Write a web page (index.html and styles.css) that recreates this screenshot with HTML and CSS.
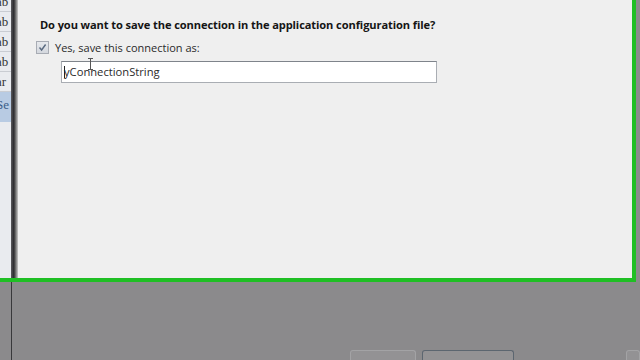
FILE: index.html
```html
<!DOCTYPE html>
<html lang="en">
<head>
  <meta charset="UTF-8" />
  <title>Save Connection String</title>
  <link rel="stylesheet" href="styles.css">
</head>
<body>
  <div class="capture">
    <div class="side-list">
      <div class="side-item">ab</div>
      <div class="side-item">ab</div>
      <div class="side-item">ab</div>
      <div class="side-item">ab</div>
      <div class="side-item">ar</div>
      <div class="side-item selected">Se</div>
    </div>
    <div class="frame-edge"></div>
    <div class="wizard-body">
      <h2 class="question">Do you want to save the connection in the application configuration file?</h2>
      <label class="save-option">
        <span class="check-box">
          <svg width="9" height="9" viewBox="0 0 9 9"><path d="M1.5 4.5 L3.6 7 L7.6 1.5" fill="none" stroke="#5a6a80" stroke-width="1.4"/></svg>
        </span>
        Yes, save this connection as:
      </label>
      <div class="name-field">
        <span class="caret"></span>yConnectionString
        <span class="ibeam"></span>
      </div>
    </div>
  </div>
  <div class="lower">
    <div class="lower-edge"></div>
    <div class="buttons">
      <span class="btn"></span>
      <span class="btn default"></span>
      <span class="btn stub"></span>
    </div>
  </div>
</body>
</html>
```

FILE: styles.css
```css
body {
  margin: 0;
  width: 640px;
  height: 360px;
  overflow: hidden;
  background: #8b8a8c;
  font-family: 'Open Sans', 'Liberation Sans', sans-serif;
  color: #1a1a1a;
}
.capture {
  display: flex;
  width: 632px;
  height: 278px;
  border-right: 4px solid #1fbf24;
  border-bottom: 4px solid #1fbf24;
}
.side-list {
  width: 11px;
  background: #e9ebef;
  overflow: hidden;
  font-family: 'Liberation Serif', serif;
  font-size: 13px;
  display: flex;
  flex-direction: column;
}
.side-item {
  flex: none;
  height: 19px;
  line-height: 19px;
  margin-left: -4px;
  color: #333;
  border-bottom: 1px solid #c9ccd2;
}
.side-item:first-child {
  height: 11px;
  line-height: 4px;
}
.side-item.selected {
  height: 30px;
  line-height: 26px;
  background: #b8cbe3;
  color: #3a5d88;
  border-bottom: none;
}
.frame-edge {
  width: 7px;
  background: linear-gradient(90deg, #5a5a5e 0%, #2b2b2e 40%, #777 70%, #c9c9c9 100%);
}
.wizard-body {
  flex: 1;
  background: #efefef;
  padding: 17px 0 0 22px;
}
.question {
  margin: 0 0 8px;
  font-size: 11.1px;
  font-weight: 700;
  letter-spacing: -0.1px;
  color: #151515;
}
.save-option {
  display: flex;
  align-items: center;
  gap: 6px;
  margin-left: -4px;
  font-size: 11px;
  color: #2a2a2a;
}
.check-box {
  width: 11px;
  height: 11px;
  border: 1px solid #a8acb4;
  background: linear-gradient(180deg, #e6e8ec, #d4d8de);
  display: flex;
  align-items: center;
  justify-content: center;
}
.name-field {
  position: relative;
  width: 372px;
  height: 20px;
  margin: 6px 0 0 21px;
  padding-left: 2px;
  border: 1px solid #a9adb3;
  border-top-color: #7f848b;
  background: #fff;
  font-size: 11.2px;
  line-height: 20px;
  color: #2a2a2a;
}
.caret {
  display: inline-block;
  width: 1px;
  height: 12px;
  background: #222;
  vertical-align: -2px;
  margin-right: -1px;
}
.ibeam {
  position: absolute;
  left: 28px;
  top: -4px;
  width: 1px;
  height: 12px;
  background: #555;
}
.ibeam::before,
.ibeam::after {
  content: "";
  position: absolute;
  left: -2px;
  width: 5px;
  height: 1px;
  background: #555;
}
.ibeam::before { top: 0; }
.ibeam::after { bottom: 0; }
.lower {
  display: flex;
  height: 78px;
}
.lower-edge {
  width: 7px;
  margin-left: 11px;
  background: linear-gradient(90deg, #555 0%, #2d2d30 45%, #7c7c7c 80%, #9a9a9a 100%);
}
.buttons {
  flex: 1;
  display: flex;
  align-items: flex-end;
  gap: 6px;
  padding-left: 338px;
}
.btn {
  width: 64px;
  height: 9px;
  border: 1px solid #a3a3a5;
  border-bottom: none;
  border-radius: 3px 3px 0 0;
  background: #939294;
}
.btn.default {
  width: 90px;
  border: 1px solid #5c6670;
  border-bottom: none;
  margin-right: 106px;
}
.btn.stub {
  width: 12px;
}
```
